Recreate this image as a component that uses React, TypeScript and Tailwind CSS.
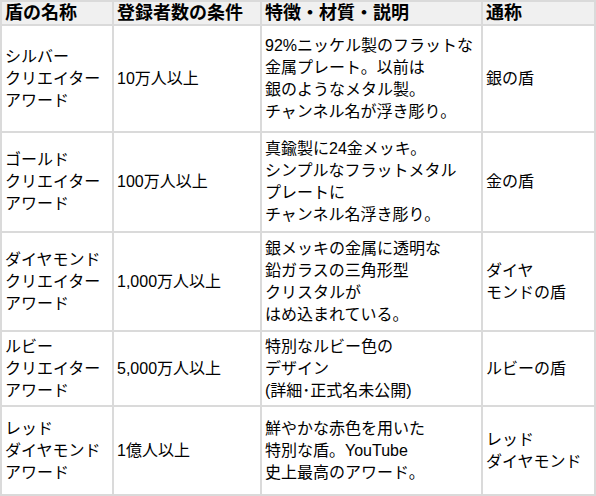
import React from "react";

// 盾の一覧
const ROWS: { name: string[]; cond: string; desc: string[]; alias: string[]; h: string }[] = [
  {
    name: ["シルバー", "クリエイター", "アワード"],
    cond: "10万人以上",
    desc: ["92%ニッケル製のフラットな", "金属プレート。以前は", "銀のようなメタル製。", "チャンネル名が浮き彫り。"],
    alias: ["銀の盾"],
    h: "h-[107px]",
  },
  {
    name: ["ゴールド", "クリエイター", "アワード"],
    cond: "100万人以上",
    desc: ["真鍮製に24金メッキ。", "シンプルなフラットメタル", "プレートに", "チャンネル名浮き彫り。"],
    alias: ["金の盾"],
    h: "h-[100px]",
  },
  {
    name: ["ダイヤモンド", "クリエイター", "アワード"],
    cond: "1,000万人以上",
    desc: ["銀メッキの金属に透明な", "鉛ガラスの三角形型", "クリスタルが", "はめ込まれている。"],
    alias: ["ダイヤ", "モンドの盾"],
    h: "h-[99px]",
  },
  {
    name: ["ルビー", "クリエイター", "アワード"],
    cond: "5,000万人以上",
    desc: ["特別なルビー色の", "デザイン", "(詳細･正式名未公開)"],
    alias: ["ルビーの盾"],
    h: "h-[75px]",
  },
  {
    name: ["レッド", "ダイヤモンド", "アワード"],
    cond: "1億人以上",
    desc: ["鮮やかな赤色を用いた", "特別な盾。YouTube", "史上最高のアワード。"],
    alias: ["レッド", "ダイヤモンド"],
    h: "h-[89px]",
  },
];

const cell = "border-2 border-[#dadada] px-[3px] align-middle text-[16px] leading-[22px] whitespace-nowrap overflow-hidden";
const head = "border-2 border-[#dadada] bg-[#f0f0f0] px-[3px] text-left font-bold text-[18px] leading-[20px] whitespace-nowrap";

function Lines({ lines }: { lines: string[] }) {
  return (
    <>
      {lines.map((l, i) => (
        <div key={i}>{l}</div>
      ))}
    </>
  );
}

export default function App() {
  return (
    <div className="w-[596px] h-[496px] bg-white text-black font-['Liberation_Sans','Noto_Sans_CJK_JP',sans-serif]">
      <table className="w-[594px] table-fixed border-collapse">
        <colgroup>
          <col className="w-[112px]" />
          <col className="w-[148px]" />
          <col className="w-[221px]" />
          <col className="w-[113px]" />
        </colgroup>
        <thead>
          <tr className="h-[24px]">
            <th className={head}>盾の名称</th>
            <th className={head}>登録者数の条件</th>
            <th className={head}>特徴・材質・説明</th>
            <th className={head}>通称</th>
          </tr>
        </thead>
        <tbody>
          {ROWS.map((r) => (
            <tr key={r.cond} className={r.h}>
              <td className={cell}>
                <Lines lines={r.name} />
              </td>
              <td className={cell}>{r.cond}</td>
              <td className={cell}>
                <Lines lines={r.desc} />
              </td>
              <td className={cell}>
                <Lines lines={r.alias} />
              </td>
            </tr>
          ))}
        </tbody>
      </table>
    </div>
  );
}
